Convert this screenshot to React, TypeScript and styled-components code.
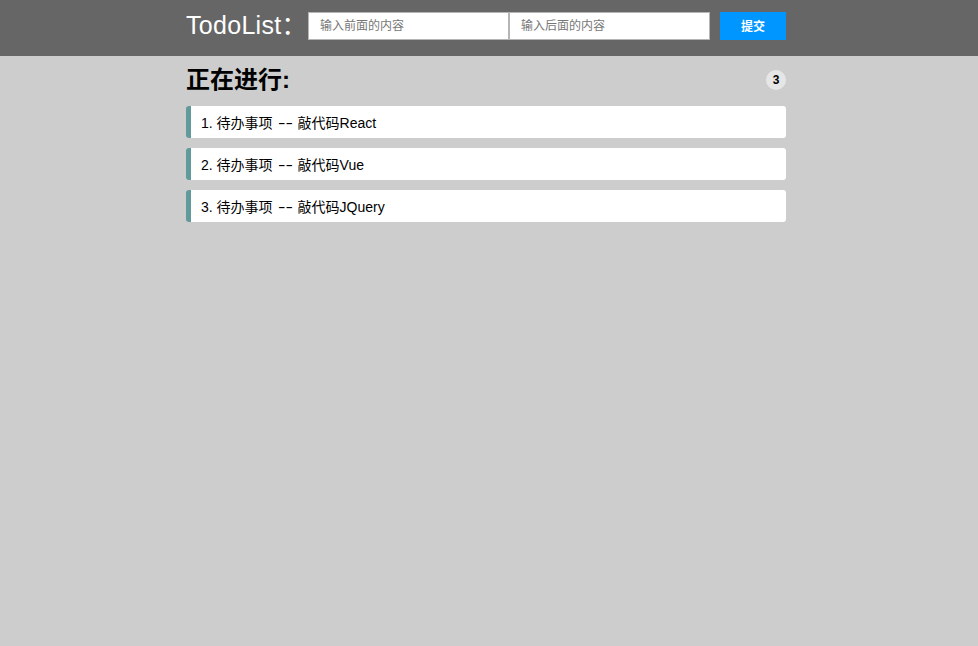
import styled, { createGlobalStyle } from "styled-components";

const GlobalStyle = createGlobalStyle`
  body {
    margin: 0;
    background: #cdcdcd;
    font-family: "Liberation Sans", "Noto Sans CJK SC", sans-serif;
  }
`;

const todos = [
  { id: 1, front: "待办事项", back: "敲代码React" },
  { id: 2, front: "待办事项", back: "敲代码Vue" },
  { id: 3, front: "待办事项", back: "敲代码JQuery" },
];

export default function App() {
  return (
    <Page>
      <GlobalStyle />
      <Header>
        <Bar>
          <Title>TodoList：</Title>
          <Input placeholder="输入前面的内容" />
          <Input placeholder="输入后面的内容" />
          <Submit>提交</Submit>
        </Bar>
      </Header>
      <Section>
        <ListHead>
          <Heading>正在进行:</Heading>
          <Count>{todos.length}</Count>
        </ListHead>
        <List>
          {todos.map((t, i) => (
            <Item key={t.id}>
              <span>{`${i + 1}. ${t.front}`}</span>
              <Dash>--</Dash>
              <span>{t.back}</span>
            </Item>
          ))}
        </List>
      </Section>
    </Page>
  );
}

const Page = styled.div`
  padding-right: 6px;
`;

const Header = styled.div`
  height: 56px;
  background: #666666;
  margin-right: -6px;
  padding-right: 6px;
`;

const Bar = styled.div`
  width: 600px;
  margin: 0 auto;
  display: flex;
  align-items: flex-start;
  padding-top: 12px;
`;

const Section = styled.div`
  width: 600px;
  margin: 0 auto;
  display: flex;
  flex-direction: column;
`;

const Title = styled.div`
  color: #fff;
  font-size: 25px;
  line-height: 26px;
  width: 122px;
  white-space: nowrap;
  letter-spacing: 0.3px;
`;

const Input = styled.input`
  box-sizing: border-box;
  width: 201px;
  height: 28px;
  border: 1px solid #b5b5b5;
  outline: none;
  padding: 0 11px;
  font-size: 12px;
  font-family: "Liberation Sans", "Noto Sans CJK SC", sans-serif;
  background: #fff;
  &::placeholder {
    color: #777;
  }
`;

const Submit = styled.button`
  margin-left: 10px;
  width: 66px;
  height: 28px;
  padding: 0 0 2px;
  border: none;
  background: #0096ff;
  color: #fff;
  font-weight: bold;
  font-size: 12px;
  font-family: "Liberation Sans", "Noto Sans CJK SC", sans-serif;
`;

const ListHead = styled.div`
  display: flex;
  align-items: center;
  justify-content: space-between;
  padding: 12px 0 14px;
`;

const Heading = styled.h2`
  margin: 0;
  font-size: 24px;
  line-height: 24px;
  font-weight: bold;
  color: #000;
`;

const Count = styled.span`
  width: 20px;
  height: 20px;
  border-radius: 50%;
  background: #e6e6e6;
  display: flex;
  align-items: center;
  justify-content: center;
  font-size: 12px;
  font-weight: bold;
  color: #000;
`;

const List = styled.ol`
  list-style: none;
  margin: 0;
  padding: 0;
  display: flex;
  flex-direction: column;
  gap: 10px;
`;

const Item = styled.li`
  height: 32px;
  background: #fff;
  border-left: 5px solid #629a9c;
  border-radius: 3px;
  padding-left: 10px;
  display: flex;
  align-items: center;
  font-size: 14px;
  color: #000;
`;

const Dash = styled.span`
  display: inline-block;
  width: 15px;
  margin: 1px 5px 0 5px;
  transform: scaleX(1.6);
  transform-origin: left center;
`;
